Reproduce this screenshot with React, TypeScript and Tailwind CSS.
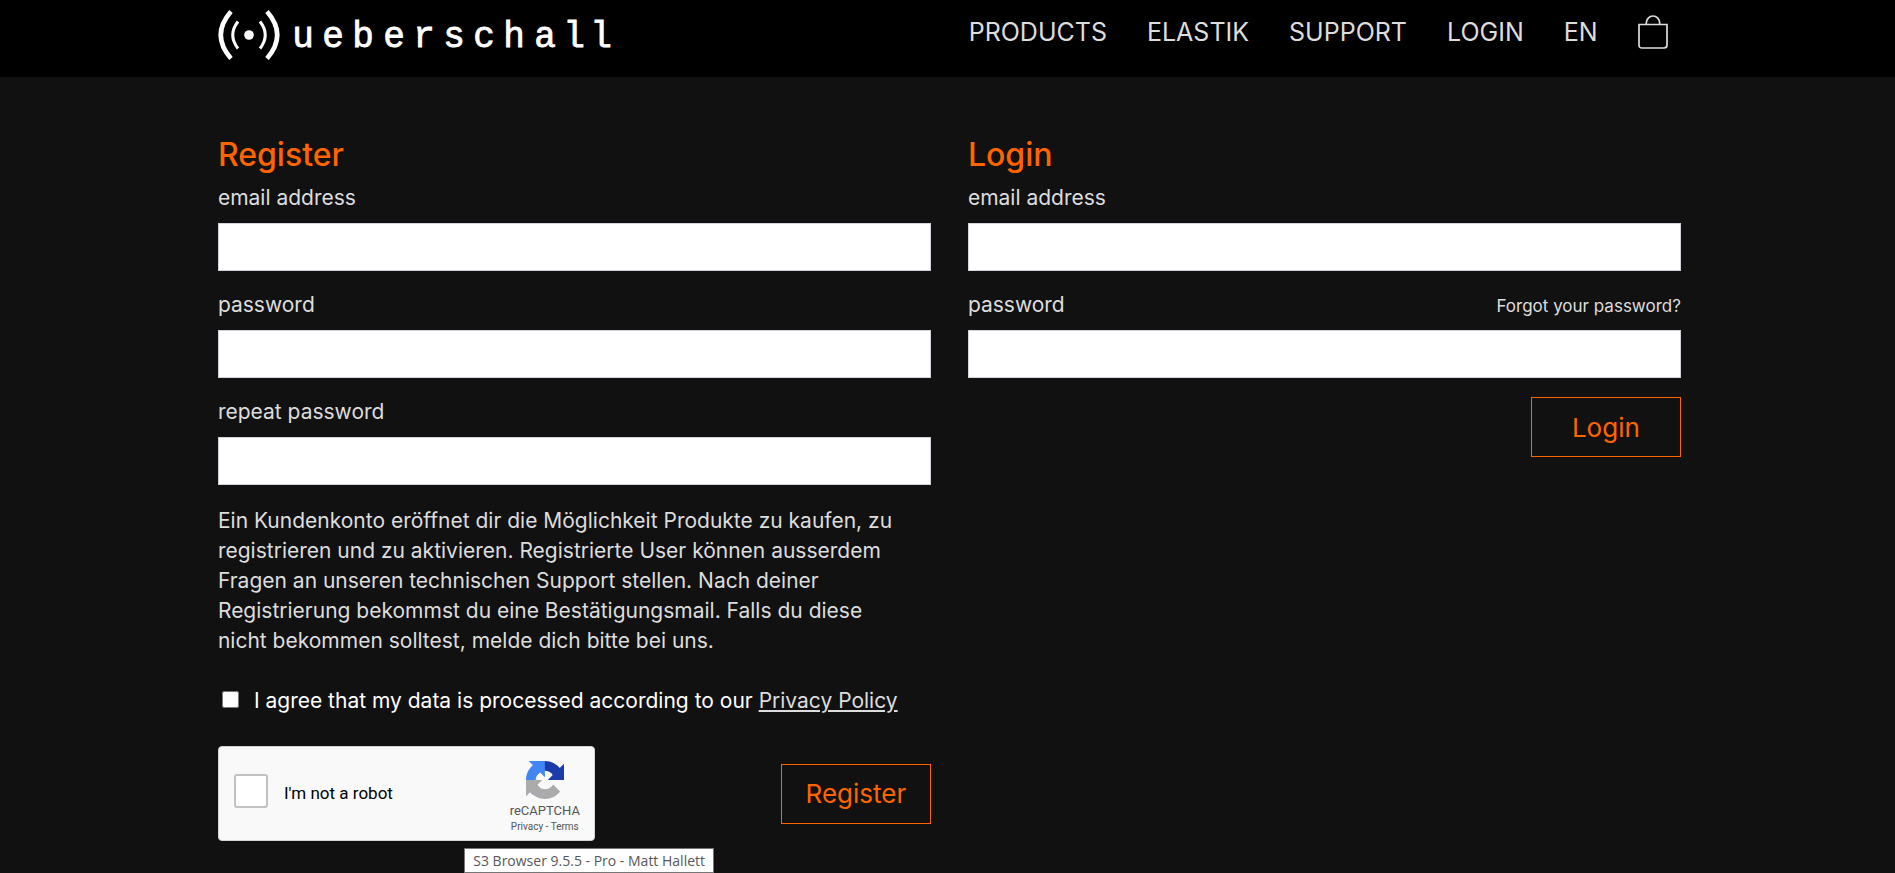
import { useId, useState } from 'react';
import type { ReactNode } from 'react';

const NAV_LINKS = [
  { label: 'PRODUCTS', href: '#products' },
  { label: 'ELASTIK', href: '#elastik' },
  { label: 'SUPPORT', href: '#support' },
  { label: 'LOGIN', href: '#login' },
  { label: 'EN', href: '#en' },
];

const Logo = () => (
  <svg width="396" height="70" viewBox="0 0 396 70" fill="none" stroke="#fff" className="block">
    <path d="M13 11.5 Q-7.5 35 13 58.5" strokeWidth="4.6" />
    <path d="M20 21.5 Q9.5 35 20 48.5" strokeWidth="3" />
    <circle cx="31" cy="35" r="4.8" fill="#fff" stroke="none" />
    <path d="M42 21.5 Q52.5 35 42 48.5" strokeWidth="3" />
    <path d="M49 11.5 Q69.5 35 49 58.5" strokeWidth="4.6" />
    <text
      x="85 115 145 176 206 236 266 296 327 356 383"
      y="47"
      textAnchor="middle"
      fill="#fff"
      strokeWidth="0.8"
      fontSize="36"
      className="font-['Liberation_Mono',monospace]"
    >
      ueberschall
    </text>
  </svg>
);

const BagIcon = () => (
  <svg width="30" height="34" viewBox="0 0 30 34" fill="none" stroke="#ddd" strokeWidth="1.7">
    <path d="M1 9.5 H29 V30 Q29 33 26 33 H4 Q1 33 1 30 Z" />
    <path d="M8.3 9.5 V8 A6.7 7 0 0 1 21.7 8 V9.5" />
  </svg>
);

const RecaptchaLogo = () => (
  <svg width="38" height="38" viewBox="0 0 64 64">
    <path
      fill="#1c3aa9"
      d="M64 31.955l-.033-1.37V4.687l-7.16 7.16C50.948 4.674 42.033.093 32.05.093c-10.4 0-19.622 4.96-25.458 12.64l11.736 11.86a15.55 15.55 0 0 1 4.754-5.334c2.05-1.6 4.952-2.906 8.968-2.906.485 0 .86.057 1.135.163 4.976.393 9.288 3.14 11.828 7.124l-8.307 8.307L64 31.953"
    />
    <path
      fill="#4285f4"
      d="M31.862.094l-1.37.033H4.594l7.16 7.16C4.58 13.147 0 22.06 0 32.046c0 10.4 4.96 19.622 12.64 25.458L24.5 45.768a15.55 15.55 0 0 1-5.334-4.754c-1.6-2.05-2.906-4.952-2.906-8.968 0-.485.057-.86.163-1.135.393-4.976 3.14-9.288 7.124-11.828l8.307 8.307L31.86.095"
    />
    <path
      fill="#ababab"
      d="M.001 32.045l.033 1.37v25.898l7.16-7.16c5.86 7.173 14.774 11.754 24.76 11.754 10.4 0 19.622-4.96 25.458-12.64l-11.736-11.86a15.55 15.55 0 0 1-4.754 5.334c-2.05 1.6-4.952 2.906-8.968 2.906-.485 0-.86-.057-1.135-.163-4.976-.393-9.288-3.14-11.828-7.124l8.307-8.307c-10.522.04-22.4.066-27.295-.005"
    />
  </svg>
);

interface FieldProps {
  label: string;
  type?: string;
  extra?: ReactNode;
}

const Field = ({ label, type = 'password', extra }: FieldProps) => {
  const id = useId();

  return (
    <div className="mb-[19px]">
      <div className="flex items-baseline justify-between h-[30px] mb-2.5 leading-[30px]">
        <label htmlFor={id}>{label}</label>
        {extra}
      </div>
      <input
        id={id}
        type={type}
        className="block w-full h-12 px-3 bg-white border border-[#ced4da] text-gray-800 outline-none"
      />
    </div>
  );
};

const OutlineButton = ({ children }: { children: ReactNode }) => (
  <button
    type="submit"
    className="w-[150px] h-[60px] border border-[#ff6400] text-[#ff6400] text-[26px] hover:bg-[#ff6400] hover:text-white"
  >
    {children}
  </button>
);

const Recaptcha = () => {
  const [checked, setChecked] = useState(false);

  return (
    <div className="w-[377px] h-[95px] flex items-center justify-between pl-[15px] pr-3.5 bg-[#f9f9f9] border border-[#d3d3d3] rounded-[4px] font-[Roboto,sans-serif]">
      <label className="flex items-center gap-4 text-[17px] text-black">
        <input
          type="checkbox"
          checked={checked}
          onChange={() => setChecked(!checked)}
          className="appearance-none w-[34px] h-[34px] mb-1.5 bg-white border-2 border-[#c1c1c1] rounded-[3px] checked:bg-[#4285f4]"
        />
        I'm not a robot
      </label>
      <div className="flex flex-col items-center pt-2 text-[#555]">
        <RecaptchaLogo />
        <div className="mt-1 text-[13px] leading-4">reCAPTCHA</div>
        <div className="text-[10px] leading-4">
          <a href="#privacy">Privacy</a> - <a href="#terms">Terms</a>
        </div>
      </div>
    </div>
  );
};

export default function App() {
  return (
    <div className="min-h-screen bg-[#111] text-[#ddd] text-[21px] font-['Inter',sans-serif]">
      <header className="h-[77px] bg-black pl-[11.5%] pr-[12%] flex items-start justify-between">
        <a href="#home" aria-label="ueberschall">
          <Logo />
        </a>
        <nav className="flex items-center gap-10 pt-3.5 text-[25px] leading-9">
          {NAV_LINKS.map((link) => (
            <a key={link.label} href={link.href} className="hover:text-white">
              {link.label}
            </a>
          ))}
          <a href="#cart" aria-label="Cart">
            <BagIcon />
          </a>
        </nav>
      </header>

      <main className="pl-[11.5%] pr-[11.3%] pt-[58px] grid grid-cols-2 gap-[37px] items-start">
        {/* Register */}
        <form onSubmit={(e) => e.preventDefault()}>
          <h2 className="text-[32px] leading-10 font-medium text-[#ff6400] mb-2">Register</h2>
          <Field label="email address" type="email" />
          <Field label="password" />
          <Field label="repeat password" />

          <p className="leading-[30px] pt-0.5 mb-[30px] pr-5">
            Ein Kundenkonto eröffnet dir die Möglichkeit Produkte zu kaufen, zu registrieren und zu
            aktivieren. Registrierte User können ausserdem Fragen an unseren technischen Support
            stellen. Nach deiner Registrierung bekommst du eine Bestätigungsmail. Falls du diese
            nicht bekommen solltest, melde dich bitte bei uns.
          </p>

          <div className="flex items-center mb-[30px] pl-1 leading-[30px] text-white">
            <input id="agree" type="checkbox" className="w-[17px] h-[17px] mr-[15px] mb-1" />
            <label htmlFor="agree">
              I agree that my data is processed according to our{' '}
              <a href="#privacy-policy" className="text-[#ddd] underline">
                Privacy Policy
              </a>
            </label>
          </div>

          <div className="flex items-center justify-between">
            <Recaptcha />
            <OutlineButton>Register</OutlineButton>
          </div>
        </form>

        {/* Login */}
        <form onSubmit={(e) => e.preventDefault()}>
          <h2 className="text-[32px] leading-10 font-medium text-[#ff6400] mb-2">Login</h2>
          <Field label="email address" type="email" />
          <Field
            label="password"
            extra={
              <a href="#forgot" className="text-[17px]">
                Forgot your password?
              </a>
            }
          />
          <div className="flex justify-end">
            <OutlineButton>Login</OutlineButton>
          </div>
        </form>
      </main>

      <div
        role="tooltip"
        className="fixed bottom-0 left-[24.5%] h-[25px] px-2 bg-white border border-[#767676] text-sm leading-[23px] text-[#575757] font-['Open_Sans',sans-serif]"
      >
        S3 Browser 9.5.5 - Pro - Matt Hallett
      </div>
    </div>
  );
}
